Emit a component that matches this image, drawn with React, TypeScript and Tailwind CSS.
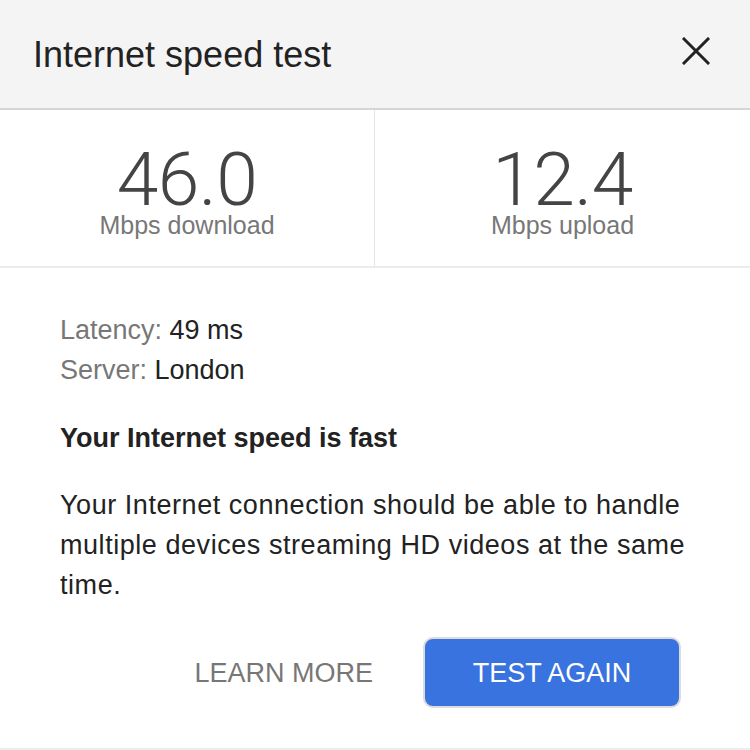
const font = "font-['Liberation_Sans',Arial,sans-serif]";

function Stat({ value, label }: { value: string; label: string }) {
  return (
    <div className="flex flex-col items-center pt-[37px]">
      <div className="font-['Roboto',sans-serif] font-light text-[75px] leading-[64px] text-[#444] tracking-[-0.5px]">{value}</div>
      <div className="text-[25px] leading-[28px] text-[#777]">{label}</div>
    </div>
  );
}

export default function App() {
  return (
    <div className={`${font} w-[750px] h-[750px] bg-white flex flex-col border-b-2 border-[#ececec]`}>
      {/* Header */}
      <header className="h-[110px] shrink-0 bg-[#f4f4f4] border-b-2 border-[#d6d6d6] flex items-center justify-between pl-[33px] pr-[40px]">
        <h1 className="text-[36px] text-[#222] pt-[2px]">Internet speed test</h1>
        <svg width="28" height="28" viewBox="0 0 28 28" className="mb-[6px]">
          <path d="M2 2L26 26M26 2L2 26" stroke="#222" strokeWidth="3" strokeLinecap="square" />
        </svg>
      </header>

      {/* Results */}
      <section className="h-[158px] shrink-0 grid grid-cols-2 border-b-2 border-[#ececec]">
        <div className="border-r border-[#e6e6e6]">
          <Stat value="46.0" label="Mbps download" />
        </div>
        <Stat value="12.4" label="Mbps upload" />
      </section>

      {/* Details */}
      <section className="flex-1 flex flex-col px-[60px] pt-[42px] text-[27px] leading-[40px] text-[#222]">
        <div>
          <span className="text-[#777]">Latency:</span> 49 ms
        </div>
        <div>
          <span className="text-[#777]">Server:</span> London
        </div>
        <h2 className="font-bold mt-[28px]">Your Internet speed is fast</h2>
        <p className="mt-[27px] tracking-[0.55px]">
          Your Internet connection should be able to handle multiple devices streaming HD videos at the same time.
        </p>
        <div className="flex items-center justify-end gap-[50px] mt-[32px] pr-[9px]">
          <button className="text-[27px] text-[#777]">LEARN MORE</button>
          <button className="w-[258px] h-[71px] rounded-[10px] bg-[#3873df] border-2 border-[#dcdcdc] text-white text-[27px]">
            TEST AGAIN
          </button>
        </div>
      </section>
    </div>
  );
}
